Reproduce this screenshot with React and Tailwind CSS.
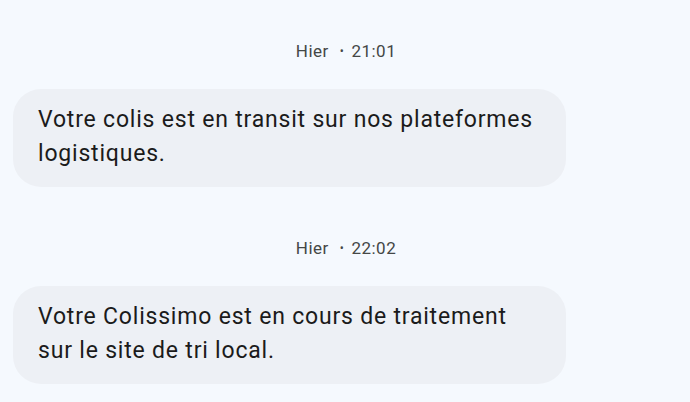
export default function App() {
  const groups = [
    { when: "Hier", lines: ["Votre colis est en transit sur nos plateformes", "logistiques."], t: "21:01" },
    { when: "Hier", lines: ["Votre Colissimo est en cours de traitement", "sur le site de tri local."], t: "22:02" },
  ];
  return (
    <div className="w-[690px] h-[402px] overflow-hidden bg-[#f5f9fe] px-[13px] pt-[39px]" style={{ fontFamily: "Roboto, 'Noto Sans', sans-serif" }}>
      {groups.map((g, i) => (
        <div key={i} className="flex flex-col mb-[49px]">
          <div className="h-[24px] flex items-center justify-center text-[17px] text-[#444746] leading-[24px] tracking-[0.5px] pl-[2px]">
            <span>{g.when}</span>
            <span className="ml-[11px] mr-[7px] text-[12px]">•</span>
            <span>{g.t}</span>
          </div>
          <div className="mt-[26px] w-[553px] h-[98px] rounded-[28px] bg-[#edf0f5] px-[25px] pt-[14px] text-[23px] leading-[34px] tracking-[0.8px] text-[#1b1b1b] whitespace-nowrap">
            {g.lines.map((l, j) => (
              <div key={j}>{l}</div>
            ))}
          </div>
        </div>
      ))}
    </div>
  );
}
